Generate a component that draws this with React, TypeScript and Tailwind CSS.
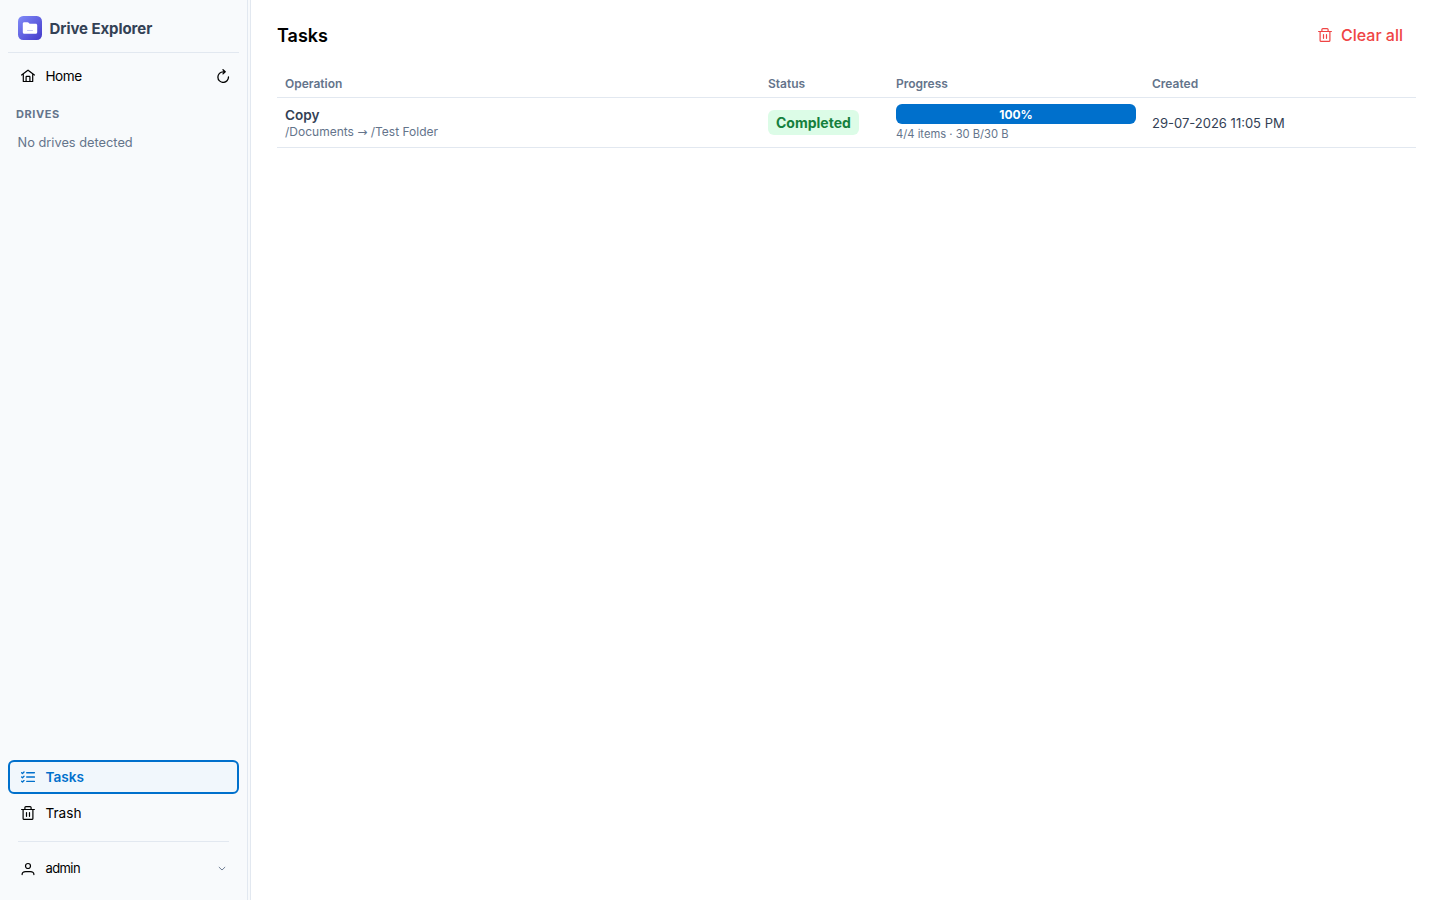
import type { ReactNode } from "react";

const TASKS = [
  {
    id: 1,
    operation: "Copy",
    source: "/Documents",
    target: "/Test Folder",
    status: "Completed",
    progress: 100,
    detail: "4/4 items · 30 B/30 B",
    created: "29-07-2026 11:05 PM"
  }
];

function Icon({ size = 14, className = "", children }: { size?: number; className?: string; children: ReactNode }) {
  return (
    <svg
      width={size}
      height={size}
      viewBox="0 0 14 14"
      fill="none"
      stroke="currentColor"
      strokeWidth="1.2"
      strokeLinecap="round"
      strokeLinejoin="round"
      className={`shrink-0 ${className}`}
      aria-hidden
    >
      {children}
    </svg>
  );
}

function HomeIcon() {
  return (
    <Icon>
      <path d="M.6 6 6.6 1.4c.3-.2.6-.2.8 0L13.4 6M2.3 5v7.5h9.4V5M5.1 12.4V7.9c0-.3.2-.5.5-.5h2.8c.3 0 .5.2.5.5v4.5" />
    </Icon>
  );
}

function RefreshIcon() {
  return (
    <Icon>
      <path d="M7.2 2.8A5.3 5.3 0 1 0 12.5 8M7.2 2.8h1.6M7 .7l2.2 2.1L7 4.9" strokeWidth="1.3" />
    </Icon>
  );
}

function TrashIcon({ className }: { className?: string }) {
  return (
    <Icon className={className}>
      <path d="M.6 3.5h12.8M2.1 3.5v8.9c0 .6.4 1 1 1h7.8c.6 0 1-.4 1-1V3.5M3.9 3.3V1.6c0-.6.4-1 1-1h4.2c.6 0 1 .4 1 1v1.7M5.5 6.5v3.8M8.5 6.5v3.8" />
    </Icon>
  );
}

function TasksIcon() {
  return (
    <Icon>
      <path
        d="M5.7 2.7h7.7M5.7 7h7.7M5.7 11.3h7.7M.6 2.7l.9.8L3 2M.6 7l.9.8L3 6.3M.6 11.3l.9.8L3 10.6"
        strokeWidth="1.35"
      />
    </Icon>
  );
}

function UserIcon() {
  return (
    <Icon>
      <circle cx="7" cy="4" r="2.5" />
      <path d="M1.1 12.6c0-1.9 1.7-3 3.6-3h4.6c1.9 0 3.6 1.1 3.6 3" />
    </Icon>
  );
}

function Logo() {
  return (
    <svg width="24" height="24" viewBox="0 0 24 24" className="shrink-0" aria-hidden>
      <defs>
        <linearGradient id="logo" x1="0" y1="0" x2="1" y2="1">
          <stop offset="0" stopColor="#818cf8" />
          <stop offset="1" stopColor="#4338ca" />
        </linearGradient>
      </defs>
      <rect width="24" height="24" rx="5.2" fill="url(#logo)" />
      <path
        d="M4.8 7.8c0-1 .6-1.5 1.5-1.5h3.3c.5 0 .8.2 1.1.5l.9.9h6c1 0 1.6.6 1.6 1.5v7c0 .9-.6 1.5-1.5 1.5H6.3c-.9 0-1.5-.6-1.5-1.5z"
        fill="#fff"
      />
      <rect x="9" y="14" width="6" height="1" rx=".5" fill="#c7c9f5" />
    </svg>
  );
}

function Sidebar() {
  return (
    <aside className="flex w-[247px] shrink-0 flex-col bg-[#f8fafc] px-2 text-[13.6px] text-black">
      <div className="flex h-[53px] items-center gap-[7.5px] border-b border-[#e2e8f0] pl-2.5 pt-1">
        <Logo />
        <span className="pt-0.5 text-[15px] font-bold tracking-[-0.07px] text-[#334155]">Drive Explorer</span>
      </div>

      <div className="mt-[7px] flex h-8 items-center gap-[11px] pl-[12.5px] pr-[9px]">
        <HomeIcon />
        <span className="flex-1 tracking-[-0.5px]">Home</span>
        <RefreshIcon />
      </div>

      <h2 className="mt-[13px] pl-2 text-[11px] font-bold leading-[18px] tracking-[0.55px] text-[#64748b]">
        DRIVES
      </h2>
      <p className="mt-2.5 pl-[9.6px] text-[12.8px] leading-5 text-[#64748b]">No drives detected</p>

      <nav className="mt-auto">
        <a className="flex h-[34px] items-center gap-[11px] rounded-md border-2 border-[#0070cc] bg-[#f1f7fc] pl-[10.5px] font-semibold text-[#0070cc]">
          <TasksIcon />
          <span className="pt-px">Tasks</span>
        </a>
        <a className="mt-0.5 flex h-[34px] items-center gap-[11px] pl-[12.5px]">
          <TrashIcon />
          <span className="pt-px">Trash</span>
        </a>
      </nav>
      <div className="mx-2.5 mt-[11px] border-t border-[#e2e8f0]" />
      <button type="button" className="mb-[15px] mt-[11px] flex h-8 items-center gap-[11px] pl-[12.5px] pr-3">
        <UserIcon />
        <span className="flex-1 text-left text-[13px] tracking-[-0.6px]">admin</span>
        <Icon size={10} className="text-[#64748b]">
          <path d="M3 4.6 7 8.4l4-3.8" strokeWidth="1.3" />
        </Icon>
      </button>
    </aside>
  );
}

export default function App() {
  return (
    <div className="flex h-screen bg-white font-['Inter',sans-serif]">
      <Sidebar />
      <div className="w-1 shrink-0 border-x border-[#e2e8f0] bg-[#f8fafc]" />

      <main className="min-w-0 flex-1 pl-[26px] pr-6">
        <header className="flex h-[71px] items-center justify-between pr-[13px]">
          <h1 className="text-lg font-semibold text-black">Tasks</h1>
          <button type="button" className="flex items-center gap-[9px] pb-0.5 text-base font-medium text-[#ef4444]">
            <TrashIcon />
            Clear all
          </button>
        </header>

        <table className="w-full table-fixed text-left">
          <thead>
            <tr className="h-[26px] border-b border-[#e2e8f0] text-xs text-[#64748b]">
              <th className="px-2 pt-px font-semibold">Operation</th>
              <th className="w-32 px-2 pt-px font-semibold">Status</th>
              <th className="w-64 px-2 pt-px font-semibold">Progress</th>
              <th className="w-[272px] px-2 pt-px font-semibold">Created</th>
            </tr>
          </thead>
          <tbody>
            {TASKS.map((task) => (
              <tr key={task.id} className="h-[50px] border-b border-[#e2e8f0] text-[13px] text-[#334155]">
                <td className="px-2 pt-0.5">
                  <div className="text-[13.6px] font-semibold leading-[17px]">{task.operation}</div>
                  <div className="text-xs text-[#64748b]">
                    {task.source}{" "}
                    <span className="font-['Noto_Sans','DejaVu_Sans',sans-serif] leading-none">→</span>{" "}
                    {task.target}
                  </div>
                </td>
                <td className="px-2">
                  <span className="flex h-[25px] w-fit items-center rounded-md bg-[#dcfce7] px-2 pt-px text-sm font-bold text-[#15803d]">
                    {task.status}
                  </span>
                </td>
                <td className="px-2 pt-0.5">
                  <div className="h-5 overflow-hidden rounded-md bg-[#e2e8f0]">
                    <div
                      className="flex h-full items-center justify-center bg-[#0070cc] pt-px text-xs font-bold text-white"
                      style={{ width: `${task.progress}%` }}
                    >
                      {task.progress}%
                    </div>
                  </div>
                  <div className="mt-0.5 text-[11.2px] leading-4 text-[#64748b]">{task.detail}</div>
                </td>
                <td className="px-2 pt-[3px]">{task.created}</td>
              </tr>
            ))}
          </tbody>
        </table>
      </main>
    </div>
  );
}
